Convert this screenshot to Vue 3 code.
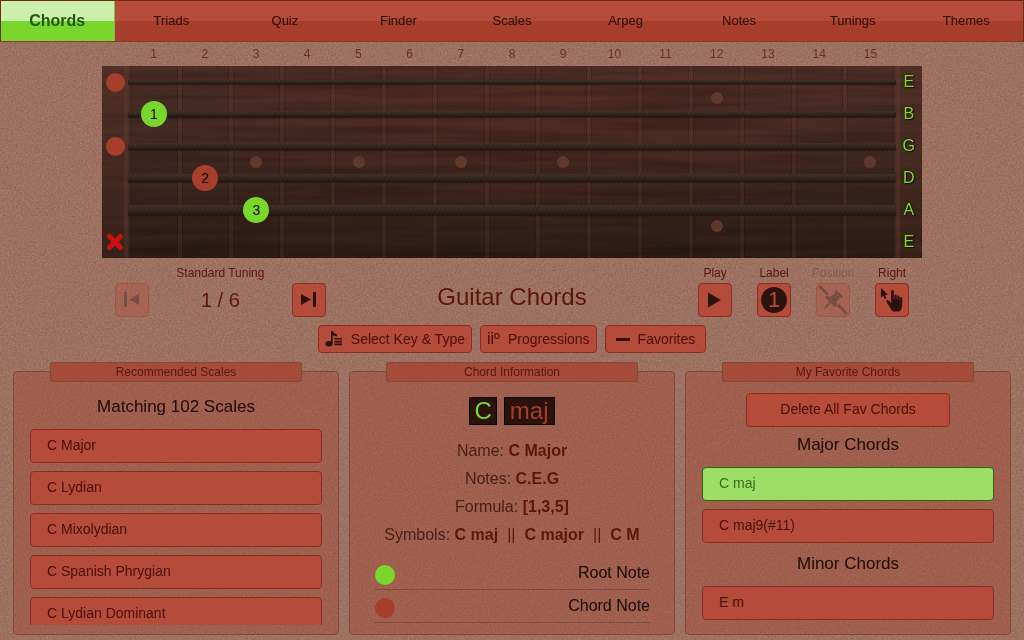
<template>
  <div class="page">
    <svg class="grain" aria-hidden="true">
      <filter id="noise" color-interpolation-filters="sRGB">
        <feTurbulence type="fractalNoise" baseFrequency="0.6" numOctaves="3" seed="4" />
        <feColorMatrix
          type="matrix"
          values="0.8 0.8 0 0 -0.3  0.8 0.8 0 0 -0.3  0.8 0.8 0 0 -0.3  0 0 0 0 1"
        />
      </filter>
      <rect width="100%" height="100%" filter="url(#noise)" />
    </svg>

    <nav class="tabs">
      <a
        v-for="tab in tabs"
        :key="tab"
        href="#"
        class="tab"
        :class="{ active: activeTab === tab }"
        @click.prevent="activeTab = tab"
        >{{ tab }}</a
      >
    </nav>

    <div class="neck">
      <div class="fret-numbers">
        <span v-for="n in 15" :key="n" :style="{ gridColumn: n + 1 }">{{ n }}</span>
      </div>

      <div class="board">
        <svg class="wood" aria-hidden="true">
          <filter id="wood-grain" color-interpolation-filters="sRGB">
            <feTurbulence type="fractalNoise" baseFrequency="0.006 0.13" numOctaves="4" seed="9" />
            <feColorMatrix
              type="matrix"
              values="0 0 0 0 0.06  0 0 0 0 0.02  0 0 0 0 0.01  1.9 0 0 0 -0.6"
            />
          </filter>
          <rect width="100%" height="100%" filter="url(#wood-grain)" />
        </svg>
        <div class="nut start"></div>
        <div
          v-for="n in 15"
          :key="'f' + n"
          class="fret"
          :style="{ gridColumn: n + 1 }"
        ></div>
        <div class="nut end"></div>
        <div
          v-for="(dot, i) in inlays"
          :key="'d' + i"
          class="inlay"
          :style="{ gridColumn: dot.fret + 1, gridRow: dot.rows }"
        ></div>
        <div
          v-for="(size, i) in stringSizes"
          :key="'s' + i"
          class="string"
          :class="{ faint: i === 5 }"
          :style="{ gridRow: i + 1, height: size + 'px' }"
        ></div>
        <div
          v-for="(m, i) in markers"
          :key="'m' + i"
          class="marker"
          :class="m.type"
          :style="{ gridColumn: m.fret + 1, gridRow: m.string }"
        >
          <svg v-if="m.type === 'muted'" width="18" height="18" viewBox="0 0 18 18">
            <path d="M3.5 3.5 14.5 14.5M14.5 3.5 3.5 14.5" />
          </svg>
          <template v-else>{{ m.finger }}</template>
        </div>
        <span
          v-for="(note, i) in tuning"
          :key="'t' + i"
          class="tuning-note"
          :style="{ gridRow: i + 1 }"
          >{{ note }}</span
        >
      </div>

      <div class="controls">
        <div class="pager">
          <span class="caption">Standard Tuning</span>
          <button class="square" aria-label="Previous" disabled>
            <svg width="34" height="34" viewBox="0 0 34 34">
              <path d="M9 9h3v15H9zM24 11v11l-10-5.500z" />
            </svg>
          </button>
          <span class="count">{{ page }} / 6</span>
          <button class="square" aria-label="Next" @click="page = Math.min(6, page + 1)">
            <svg width="34" height="34" viewBox="0 0 34 34">
              <path d="M21 9h3v15h-3zM9 11v11l10-5.500z" />
            </svg>
          </button>
        </div>

        <h1>Guitar Chords</h1>

        <div class="tools">
          <div class="tool">
            <label for="play">Play</label>
            <button id="play" class="square">
              <svg width="34" height="34" viewBox="0 0 34 34"><path d="M10 9.500v15l13-7.500z" /></svg>
            </button>
          </div>
          <div class="tool">
            <label for="label">Label</label>
            <button id="label" class="square"><span class="round">1</span></button>
          </div>
          <div class="tool off">
            <label for="position">Position</label>
            <button id="position" class="square" disabled>
              <svg width="34" height="34" viewBox="0 0 34 34">
                <path
                  d="M19.500 6.500 27.500 14 25.500 15 24 14.800 20.500 18.500 21 22.500 19 24.300 14.800 20.300 8 26.500 7.500 26 13.300 18.700 9 14.800 10.800 12.800 15.500 13.400 19 10 18.600 8.300z"
                />
                <path d="M3 3 12 11.500M22 22l9 9" class="slash" />
              </svg>
            </button>
          </div>
          <div class="tool">
            <label for="hand">Right</label>
            <button id="hand" class="square">
              <svg width="34" height="34" viewBox="0 0 34 34">
                <path d="M6 5v9.500l2.200-1.800 1.500 3.300 1.800-.8-1.500-3.200 3-.3z" />
                <path
                  d="M16.200 8.200q0-1.500 1.300-1.500t1.300 1.500V16h.6v-3.200q0-1.200 1.200-1.200t1.200 1.200V16h.6v-2.400q0-1.100 1.100-1.100t1.100 1.100v3.100h.6v-1.700q0-1 1-1t1 1v7.500q0 3.500-2.700 5.900H18q-1.800-1.400-3.200-4.300l-3.300-5.200q-.6-1.400.5-1.800 1-.3 2 .9l2.200 2.300z"
                />
              </svg>
            </button>
          </div>
        </div>
      </div>
    </div>

    <div class="actions">
      <button>
        <svg width="18" height="16" viewBox="0 0 18 16">
          <ellipse cx="4" cy="12.800" rx="3.600" ry="2.700" />
          <path d="M6 0h1.600q.6 2.200 4.400 3.400v2Q9 4.500 7.600 4.300v8.500H6z" />
          <path d="M9.500 7h7.500v1.600H9.500zM9.500 9.800h7.500v1.600H9.500zM9.500 12.600h7.500v1.600H9.500z" />
        </svg>
        Select Key &amp; Type
      </button>
      <button><span class="degree">iiº</span>Progressions</button>
      <button>
        <svg width="14" height="16" viewBox="0 0 14 16"><path d="M0 7h14v3H0z" /></svg>
        Favorites
      </button>
    </div>

    <main class="panels">
      <section class="panel">
        <h2>Recommended Scales</h2>
        <div class="content">
          <h3 class="matching">Matching 102 Scales</h3>
          <div class="list">
            <button v-for="scale in scales" :key="scale" class="item">{{ scale }}</button>
          </div>
        </div>
      </section>

      <section class="panel">
        <h2>Chord Information</h2>
        <div class="content info">
          <div class="chord"><span class="root">C</span><span>maj</span></div>
          <p>Name: <b>C Major</b></p>
          <p>Notes: <b>C.E.G</b></p>
          <p>Formula: <b>[1,3,5]</b></p>
          <p class="symbols">
            Symbols: <b>C maj</b><i>||</i><b>C major</b><i>||</i><b>C M</b>
          </p>
          <div class="key"><span class="dot green"></span>Root Note</div>
          <div class="key"><span class="dot"></span>Chord Note</div>
        </div>
      </section>

      <section class="panel">
        <h2>My Favorite Chords</h2>
        <div class="content">
          <button class="item delete">Delete All Fav Chords</button>
          <template v-for="group in favorites" :key="group.title">
            <h3>{{ group.title }}</h3>
            <div class="list">
              <button
                v-for="chord in group.chords"
                :key="chord"
                class="item"
                :class="{ selected: selected === chord }"
                @click="selected = chord"
              >
                {{ chord }}
              </button>
            </div>
          </template>
        </div>
      </section>
    </main>
  </div>
</template>

<script setup>
import { ref } from "vue";

const tabs = [
  "Chords",
  "Triads",
  "Quiz",
  "Finder",
  "Scales",
  "Arpeg",
  "Notes",
  "Tunings",
  "Themes",
];
const activeTab = ref("Chords");
const page = ref(1);
const selected = ref("C maj");

const tuning = ["E", "B", "G", "D", "A", "E"];
const stringSizes = [4, 6, 7, 8, 10, 12];

const inlays = [
  { fret: 3, rows: "3 / 5" },
  { fret: 5, rows: "3 / 5" },
  { fret: 7, rows: "3 / 5" },
  { fret: 9, rows: "3 / 5" },
  { fret: 12, rows: "1 / 3" },
  { fret: 12, rows: "5 / 7" },
  { fret: 15, rows: "3 / 5" },
];

const markers = [
  { fret: 0, string: 1, type: "open" },
  { fret: 1, string: 2, type: "root", finger: 1 },
  { fret: 0, string: 3, type: "open" },
  { fret: 2, string: 4, type: "note", finger: 2 },
  { fret: 3, string: 5, type: "root", finger: 3 },
  { fret: 0, string: 6, type: "muted" },
];

const scales = ["C Major", "C Lydian", "C Mixolydian", "C Spanish Phrygian", "C Lydian Dominant"];

const favorites = [
  { title: "Major Chords", chords: ["C maj", "C maj9(#11)"] },
  { title: "Minor Chords", chords: ["E m"] },
];
</script>

<style>
body {
  background: #9d7161;
}
</style>

<style scoped>
.page {
  position: relative;
  isolation: isolate;
  display: flex;
  flex-direction: column;
  height: 100vh;
  min-height: 600px;
  background: #9d7161;
  color: #5a160d;
  font-family: "Liberation Sans", Arial, sans-serif;
  font-size: 14px;
}

.page * {
  box-sizing: border-box;
}

.grain {
  position: absolute;
  inset: 0;
  z-index: -1;
  width: 100%;
  height: 100%;
  mix-blend-mode: overlay;
  opacity: 0.16;
}

h1,
h2,
h3,
p {
  margin: 0;
  font-weight: normal;
}

button {
  margin: 0;
  padding: 0;
  border: 1px solid #8a3023;
  border-radius: 4px;
  background: #b54b3a;
  color: #4a0f08;
  font: inherit;
}

svg {
  display: block;
  fill: #2b120c;
}

.tabs {
  display: grid;
  grid-template-columns: repeat(9, 1fr);
  height: 42px;
  border: 1px solid #6f2a1c;
  border-bottom-color: #8a3a2a;
  background: linear-gradient(#b54b3a 50%, #a63e2b 50%);
}

.tab {
  display: flex;
  align-items: center;
  justify-content: center;
  padding-bottom: 2px;
  color: #260904;
  font-size: 13px;
  text-decoration: none;
}

.tab.active {
  padding-bottom: 0;
  border-right: 1px solid #8cb84e;
  background: linear-gradient(#caf0ab 50%, #78d62c 50%);
  color: #22560b;
  font-size: 16px;
  font-weight: bold;
}

.neck {
  width: 80%;
  margin: 0 auto;
}

.fret-numbers,
.board {
  display: grid;
  grid-template-columns: 1fr repeat(15, 2fr) 1fr;
}

.fret-numbers {
  color: #6c3024;
  font-size: 12px;
  line-height: 24px;
  text-align: center;
}

.board {
  position: relative;
  grid-template-rows: repeat(6, 32px);
  background:
    radial-gradient(ellipse at 55% 30%, rgba(110, 45, 25, 0.2), transparent 60%),
    linear-gradient(#4b2e26, #442b23 40%, #2e1d15);
}

.wood {
  position: absolute;
  width: 100%;
  height: 100%;
  opacity: 0.25;
}

.nut,
.fret {
  grid-row: 1 / -1;
  opacity: 0.7;
}

.nut {
  background: rgba(100, 58, 48, 0.3);
}

.nut.start {
  grid-column: 1;
  border-right: 4px solid rgba(115, 70, 58, 0.4);
}

.nut.end {
  grid-column: 17;
  border-left: 4px solid rgba(115, 70, 58, 0.4);
}

.fret {
  border: solid rgba(115, 70, 58, 0.25);
  border-width: 0 2px;
  box-shadow: inset 1px 0 rgba(20, 8, 4, 0.25), inset -1px 0 rgba(20, 8, 4, 0.25);
}

.inlay {
  z-index: 1;
  align-self: center;
  justify-self: center;
  width: 12px;
  height: 12px;
  border-radius: 50%;
  background: #60392d;
}

.string {
  grid-column: 2 / -2;
  align-self: center;
  z-index: 1;
  background:
    repeating-linear-gradient(120deg, rgba(0, 0, 0, 0.1) 0 2px, transparent 2px 4px),
    linear-gradient(#44322b, #362823 50%, #231813);
  box-shadow: 0 1px 1px rgba(0, 0, 0, 0.3);
}

/* the lowest string barely stands out from the wood */
.string.faint {
  opacity: 0.15;
}

.marker {
  z-index: 2;
  display: flex;
  align-items: center;
  justify-content: center;
  align-self: center;
  justify-self: center;
  width: 26px;
  height: 26px;
  border-radius: 50%;
  background: #a63e2b;
  color: #120402;
  font-size: 14px;
}

.marker.root {
  background: #78d62c;
}

.marker.open {
  width: 19px;
  height: 19px;
}

.marker.muted {
  background: none;
}

.marker path {
  stroke: #cc1010;
  stroke-width: 5;
  stroke-linecap: round;
}

.tuning-note {
  grid-column: 17;
  z-index: 1;
  color: #78e01e;
  font-size: 16px;
  line-height: 32px;
  text-align: center;
  text-shadow: 0 0 2px #1a0512, 1px 1px 1px #1a0512;
}

.controls {
  display: grid;
  grid-template-columns: 236px 1fr 236px;
  padding-top: 7px;
  font-size: 12px;
  line-height: 16px;
}

.controls h1 {
  align-self: center;
  padding-top: 12px;
  font-size: 24px;
  line-height: 28px;
  text-align: center;
}

.pager {
  display: grid;
  grid-template-columns: 59px 1fr 59px;
  gap: 2px 0;
  align-items: center;
  justify-items: center;
}

.caption {
  grid-column: 1 / -1;
}

.count {
  font-size: 20px;
}

.square {
  display: flex;
  align-items: center;
  justify-content: center;
  width: 34px;
  height: 34px;
}

.square:disabled {
  opacity: 0.35;
}

.square svg {
  flex: none;
}

.slash {
  stroke: #2b120c;
  stroke-width: 3;
}

.tools {
  display: grid;
  grid-template-columns: repeat(4, 59px);
}

.tool {
  display: flex;
  flex-direction: column;
  gap: 2px;
  align-items: center;
}

.tool.off label {
  opacity: 0.3;
}

.round {
  width: 26px;
  height: 26px;
  border-radius: 50%;
  background: #2b120c;
  color: #b54b3a;
  font-size: 22px;
  line-height: 26px;
  text-align: center;
}

.actions {
  display: flex;
  gap: 8px;
  justify-content: center;
  margin-top: 8px;
}

.actions button {
  display: flex;
  gap: 8px;
  align-items: center;
  height: 28px;
  padding: 0 6px;
}

.actions button:last-child {
  padding: 0 10px;
}

.degree {
  font-size: 16px;
}

.panels {
  flex: 1;
  display: grid;
  grid-template-columns: repeat(3, 1fr);
  gap: 10px;
  min-height: 0;
  margin: 18px 13px 5px;
}

.panel {
  display: flex;
  flex-direction: column;
  align-items: center;
  min-height: 0;
  padding: 0 16px 9px;
  border: 1px solid #83493a;
  border-radius: 4px;
  background: rgba(166, 62, 43, 0.35);
}

.panel h2 {
  flex: none;
  width: 86%;
  margin-top: -10px;
  border: 1px solid #83493a;
  border-radius: 2px;
  background: #a44b39;
  font-size: 12px;
  line-height: 18px;
  text-align: center;
}

.content {
  flex: 1;
  display: flex;
  flex-direction: column;
  width: 100%;
  min-height: 0;
  padding-top: 11px;
}

.content h3 {
  flex: none;
  color: #1c0a06;
  font-size: 17px;
  line-height: 36px;
  padding-bottom: 4px;
  text-align: center;
}

.content .matching {
  line-height: 28px;
  padding-bottom: 8px;
}

.list {
  display: flex;
  flex-direction: column;
  gap: 8px;
  overflow-y: auto;
  scrollbar-width: none;
}

.list + h3 {
  padding-top: 3px;
}

.item {
  flex: none;
  height: 34px;
  padding: 0 16px 2px;
  text-align: left;
}

.item.selected {
  border-color: #2f6516;
  background: #9ddf66;
  color: #3a6a20;
}

.item.delete {
  align-self: center;
  padding: 0 33px 2px;
}

.info {
  font-size: 16px;
  line-height: 28px;
  text-align: center;
  color: #47201a;
}

.info b {
  color: #5e150c;
}

.info i {
  margin: 0 9px;
  font-style: normal;
  color: #5e150c;
}

.info p {
  white-space: nowrap;
}

.chord {
  display: flex;
  gap: 7px;
  justify-content: center;
  padding: 4px 0 12px;
  font-size: 24px;
  line-height: 26px;
}

.chord span {
  padding: 0 5px;
  border: 1px solid #000;
  background: #2b120c;
  color: #a63e2b;
}

.chord .root {
  padding: 0 4px;
  color: #78d62c;
}

.key {
  display: flex;
  align-items: center;
  justify-content: space-between;
  height: 33px;
  margin: 0 8px;
  border-bottom: 1px solid #83493a;
  color: #170704;
}

.symbols + .key {
  margin-top: 8px;
}

.dot {
  align-self: flex-end;
  width: 20px;
  height: 20px;
  margin: 0 0 4px 1px;
  border-radius: 50%;
  background: #a63e2b;
}

.dot.green {
  background: #78d62c;
}
</style>
